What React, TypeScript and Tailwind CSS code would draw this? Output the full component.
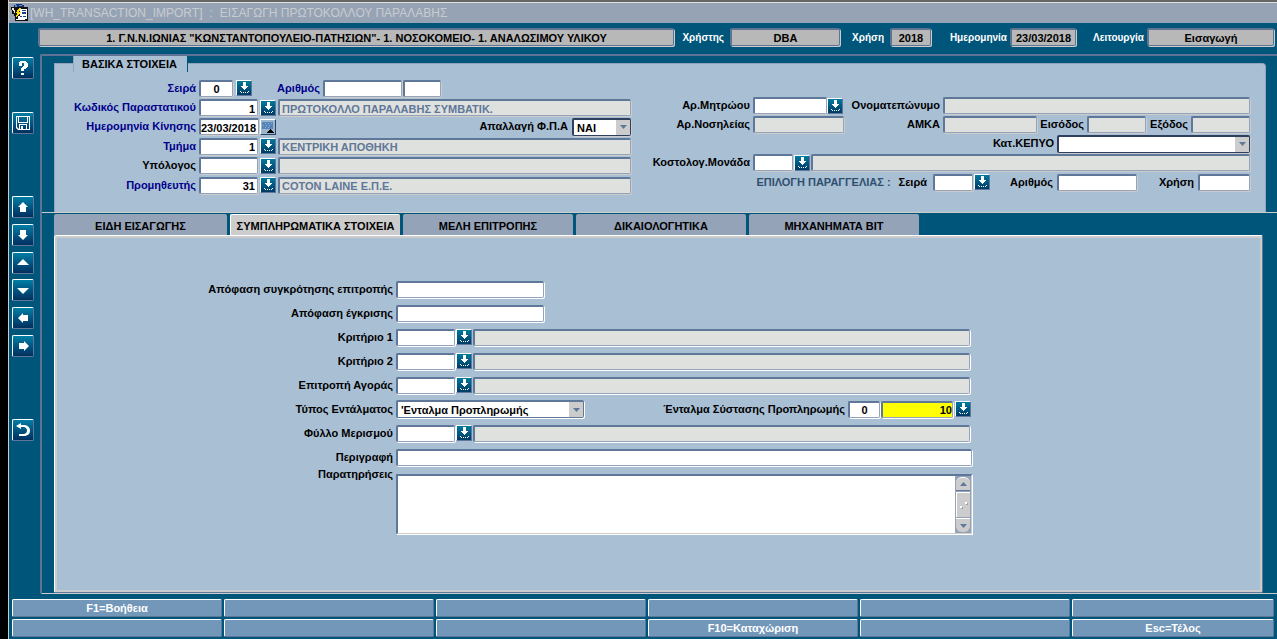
import React from "react";
import clsx from "clsx";

const FONT = "font-['Liberation_Sans',Arial,sans-serif] text-[11px] leading-[13px] font-bold";

type Tone = "white" | "grey" | "yellow";

interface FieldProps {
  id?: string;
  label?: string;
  value?: string;
  tone?: Tone;
  light?: boolean;
  tight?: boolean;
  className?: string;
}

const Field: React.FC<FieldProps> = ({ id, label, value = "", tone = "white", light, tight, className }) => (
  <input
    id={id}
    aria-label={label}
    type="text"
    defaultValue={value}
    readOnly={tone === "grey"}
    className={clsx(
      "h-[17px] min-w-0 rounded-xs border-t-2 border-l-2 border-r border-b pt-px outline-none",
      "border-t-[#5f7799] border-l-[#5f7799] border-r-[#95a3b8] border-b-[#95a3b8]",
      tight ? "px-0" : "px-0.5",
      light ? "shadow-[1px_1px_0_#ffffff]" : "shadow-[1px_1px_0_#cccccc]",
      tone === "white" && "bg-white text-black",
      tone === "grey" && "bg-[#dee1de] text-[#5f7799]",
      tone === "yellow" && "bg-[#ffff00] text-black",
      className
    )}
  />
);

const LookupButton: React.FC<{ label: string }> = ({ label }) => (
  <button
    type="button"
    aria-label={label}
    className="h-4 w-4 shrink-0 border border-t-white border-l-white border-r-[#5f7799] border-b-[#5f7799] bg-linear-to-b from-[#007a9f] to-[#003a66]"
  >
    <svg viewBox="0 0 14 14" className="h-full w-full" fill="#fff" shapeRendering="crispEdges">
      <path d="M6 1h3v4h2v1h-1v1H9v1H8v1H7V8H6V7H5V6H4V5h2z" />
      <path d="M3 10h1v1H3zM11 10h1v1h-1zM4 11h1v1H4zM6 11h1v1H6zM8 11h1v1H8zM10 11h1v1h-1z" />
    </svg>
  </button>
);

const CalendarButton: React.FC = () => (
  <button
    type="button"
    aria-label="Ημερολόγιο"
    className="h-4 w-4 shrink-0 border border-t-white border-l-white border-r-[#2b4460] border-b-[#2b4460] bg-[#9db6cf]"
  >
    <svg viewBox="0 0 14 14" className="h-full w-full" shapeRendering="crispEdges">
      <path fill="#5585b8" d="M1 2h11v7H1z" />
      <path fill="#8fb0d2" d="M4 3h1v1H4zM7 3h1v1H7zM10 3h1v1h-1zM2 5h1v1H2zM5 5h1v1H5zM8 5h1v1H8zM4 7h1v1H4zM7 7h1v1H7z" />
      <path fill="#000" d="M9 9h1v1h1v1h1v1h1v1H6v-1h1v-1h1v-1h1z" />
    </svg>
  </button>
);

interface SelectProps {
  id: string;
  value: string;
  dark?: boolean;
  className?: string;
}

const Select: React.FC<SelectProps> = ({ id, value, dark, className }) => (
  <div className={clsx("relative h-[18px]", className)}>
    <select
      id={id}
      defaultValue={value}
      className={clsx(
        "h-full w-full appearance-none rounded-xs border-t-2 border-l-2 border-r border-b bg-white pt-0.5 pl-[3px] text-black outline-none",
        dark ? "border-[#2f3f5f] shadow-[1px_1px_0_#cccccc]" : "border-[#5f7799] shadow-[1px_1px_0_#ffffff]"
      )}
    >
      <option>{value}</option>
    </select>
    <span className="pointer-events-none absolute top-0.5 right-px bottom-px flex w-3.5 items-center justify-center bg-[#cccccc]">
      <svg viewBox="0 0 7 4" className="h-1 w-[7px]" fill="#5f7799">
        <path d="M0 0h7L3.5 4z" />
      </svg>
    </span>
  </div>
);

interface LabelProps {
  htmlFor: string;
  children: React.ReactNode;
  className?: string;
}

const Label: React.FC<LabelProps> = ({ htmlFor, children, className }) => (
  <label htmlFor={htmlFor} className={clsx("shrink-0 text-right whitespace-nowrap", className)}>
    {children}
  </label>
);

const toolbar = [
  {
    label: "Βοήθεια",
    gap: "mt-[3px]",
    icon: <path d="M5 4V3h1V2h6v1h1v1h1v4h-1v1h-1v1h-2v2H7V9h1V8h1V7h1V4H8v3H5zM7 14h3v2H7z" />,
  },
  {
    label: "Αποθήκευση",
    gap: "mt-[33px]",
    icon: (
      <path
        fillRule="evenodd"
        d="M2 2h14v14H4l-2-2zM3 3v10l2 2v-5h8v5h2V3h-1v6H4V3zM5 3v5h8V3zM6 11v4h1v-3h2v3h3v-4z"
      />
    ),
  },
  { label: "Προηγούμενη ομάδα", gap: "mt-[62px]", icon: <path d="M9 4l5 5h-2v5H6V9H4z" /> },
  { label: "Επόμενη ομάδα", gap: "mt-1.5", icon: <path d="M6 4h6v5h2l-5 5-5-5h2z" /> },
  { label: "Προηγούμενη εγγραφή", gap: "mt-1.5", icon: <path d="M9 5l6 6H3z" /> },
  { label: "Επόμενη εγγραφή", gap: "mt-[5px]", icon: <path d="M3 7h12l-6 6z" /> },
  { label: "Προηγούμενο πεδίο", gap: "mt-1.5", icon: <path d="M4 9l5-5v2h5v6H9v2z" /> },
  { label: "Επόμενο πεδίο", gap: "mt-1.5", icon: <path d="M5 6h5V4l5 5-5 5v-2H5z" /> },
  {
    label: "Επιστροφή",
    gap: "mt-[62px]",
    icon: <path d="M2 5l5-3v2h4q5 1 5 5.500T11 15H5v-2h5q3-1 3-3.500T10 6H7v2z" />,
  },
];

const tabs = ["ΕΙΔΗ ΕΙΣΑΓΩΓΗΣ", "ΣΥΜΠΛΗΡΩΜΑΤΙΚΑ ΣΤΟΙΧΕΙΑ", "ΜΕΛΗ ΕΠΙΤΡΟΠΗΣ", "ΔΙΚΑΙΟΛΟΓΗΤΙΚΑ", "ΜΗΧΑΝΗΜΑΤΑ ΒΙΤ"];

const functionKeys = ["F1=Βοήθεια", "", "", "", "", "", "", "", "", "F10=Καταχώριση", "", "Esc=Τέλος"];

const TitleBar = () => (
  <header className="flex h-[23px] items-center border-t-2 border-[#666666] bg-[#95a3b5] pl-0.5 shadow-[inset_0_1px_0_#e0e0e0]">
    <svg viewBox="0 0 17 17" className="h-[17px] w-[17px] shrink-0" shapeRendering="crispEdges">
      <path fill="#1c2f6c" d="M3 1h2V0h6v1h2v3H3z" />
      <path fill="#4f8fd0" d="M4 1h2v2H4zM8 1h3v1H8z" />
      <path fill="#111" d="M0 3h5v3h1v3h1v5H5v-2H3v-2H1V6H0z" />
      <path fill="#f2ead0" d="M1 4h2v2h1v3H3V7H2V6H1z" />
      <path fill="#111" d="M4 3h13v14H4z" />
      <path fill="#fff" d="M9 5h7v10H7v-3h2z" />
      <path fill="#ffe000" d="M8 4h2L8 8h2l-5 6 1-5H5z" />
      <path fill="#1c3f8c" d="M11 6h4v1h-4zM11 8h4v2h-4zM9 12h2v1H9zM12 12h3v1h-3z" />
      <path fill="#fff" d="M5 15h9v1H5z" />
    </svg>
    <h1 className="ml-0.5 flex gap-[7px] text-[12px] leading-4 font-normal whitespace-nowrap text-[#c8ccd0]">
      <span>[WH_TRANSACTION_IMPORT]</span>
      <span>:</span>
      <span>ΕΙΣΑΓΩΓΗ ΠΡΩΤΟΚΟΛΛΟΥ ΠΑΡΑΛΑΒΗΣ</span>
    </h1>
  </header>
);

const HeaderField: React.FC<{ id: string; label?: string; value: string; className: string }> = ({
  id,
  label,
  value,
  className,
}) => (
  <input
    id={id}
    aria-label={label}
    readOnly
    defaultValue={value}
    className={clsx(
      "h-[18px] min-w-0 rounded-xs border-t-2 border-l-2 border-r border-b border-[#5f7393] bg-[#b8b8b8] text-center text-black shadow-[1px_1px_0_#cccccc] outline-none",
      className
    )}
  />
);

const SessionBar = () => (
  <div className="flex h-[31px] items-start pt-[5px] pr-[3px] pl-[29px]">
    <HeaderField
      id="unit"
      label="Μονάδα"
      value={'1. Γ.Ν.Ν.ΙΩΝΙΑΣ "ΚΩΝΣΤΑΝΤΟΠΟΥΛΕΙΟ-ΠΑΤΗΣΙΩΝ"- 1. ΝΟΣΟΚΟΜΕΙΟ- 1. ΑΝΑΛΩΣΙΜΟΥ ΥΛΙΚΟΥ'}
      className="flex-1"
    />
    <div className="flex items-center text-[10px] text-white">
      <Label htmlFor="user" className="w-[50px]">Χρήστης</Label>
      <HeaderField id="user" value="DBA" className="ml-1.5 w-[110px] text-[11px]" />
      <Label htmlFor="year" className="w-11">Χρήση</Label>
      <HeaderField id="year" value="2018" className="ml-1.5 w-[41px] text-[11px]" />
      <Label htmlFor="date" className="w-[76px]">Ημερομηνία</Label>
      <HeaderField id="date" value="23/03/2018" className="ml-[3px] w-[66px] text-[11px]" />
      <Label htmlFor="mode" className="w-[68px]">Λειτουργία</Label>
      <HeaderField id="mode" value="Εισαγωγή" className="ml-[3px] w-[127px] text-[11px]" />
    </div>
  </div>
);

const Toolbar = () => (
  <nav className="flex w-[31px] shrink-0 flex-col pl-[3px]">
    {toolbar.map((item) => (
      <button
        key={item.label}
        type="button"
        aria-label={item.label}
        className={clsx(
          "flex h-[22px] w-[22px] shrink-0 items-center justify-center rounded-xs border border-t-white border-l-white border-r-[#5f7799] border-b-[#5f7799] bg-linear-to-b from-[#007fa5] to-[#002f5f]",
          item.gap
        )}
      >
        <svg viewBox="0 0 18 18" className="h-[18px] w-[18px]" fill="#fff">
          {item.icon}
        </svg>
      </button>
    ))}
  </nav>
);

const BasicInfo = () => (
  <section className="relative mt-[7px] mr-[11px] ml-3 flex rounded-tr-sm border-t border-r border-l border-[#95a3b8] bg-[#a9bfd4] pt-3.5 pb-[17px]">
    <h2 className="absolute -top-2 left-[18px] h-4 w-[115px] border-r border-l border-l-[#95a3b8] border-r-[#00557b] bg-[#a9bfd4] pt-0.5 pl-2">
      ΒΑΣΙΚΑ ΣΤΟΙΧΕΙΑ
    </h2>

    <div className="w-[576px] shrink-0 text-[#00008b]">
      <div className="flex h-5 items-center">
        <Label htmlFor="series" className="mr-[3px] w-[141px]">Σειρά</Label>
        <Field id="series" value="0" className="w-[34px] text-center" />
        <span className="ml-[3px] flex"><LookupButton label="Αναζήτηση σειράς" /></span>
        <Label htmlFor="number" className="mr-[3px] ml-6 w-11">Αριθμός</Label>
        <Field id="number" className="w-[79px]" />
        <Field label="Αριθμός, συμπλήρωμα" className="ml-px w-[38px]" />
      </div>
      <div className="flex h-[19px] items-center">
        <Label htmlFor="doc" className="mr-[3px] w-[141px]">Κωδικός Παραστατικού</Label>
        <Field id="doc" value="1" className="w-[59px] text-right" />
        <span className="mx-0.5 flex"><LookupButton label="Αναζήτηση παραστατικού" /></span>
        <Field label="Παραστατικό" tone="grey" value="ΠΡΩΤΟΚΟΛΛΟ ΠΑΡΑΛΑΒΗΣ ΣΥΜΒΑΤΙΚ." className="flex-1" />
      </div>
      <div className="flex h-[19px] items-center">
        <Label htmlFor="moved" className="mr-[3px] w-[141px]">Ημερομηνία Κίνησης</Label>
        <Field id="moved" value="23/03/2018" tight className="w-[60px]" />
        <span className="ml-px flex"><CalendarButton /></span>
        <Label htmlFor="vat" className="mr-1 ml-auto text-black">Απαλλαγή Φ.Π.Α</Label>
        <Select id="vat" value="ΝΑΙ" dark className="w-[59px]" />
      </div>
      <div className="flex h-5 items-center">
        <Label htmlFor="dept" className="mr-[3px] w-[141px]">Τμήμα</Label>
        <Field id="dept" value="1" className="w-[59px] text-right" />
        <span className="mx-0.5 flex"><LookupButton label="Αναζήτηση τμήματος" /></span>
        <Field label="Όνομα τμήματος" tone="grey" value="ΚΕΝΤΡΙΚΗ ΑΠΟΘΗΚΗ" className="flex-1" />
      </div>
      <div className="flex h-[19px] items-center">
        <Label htmlFor="officer" className="mr-[3px] w-[141px] text-black">Υπόλογος</Label>
        <Field id="officer" className="w-[59px] text-right" />
        <span className="mx-0.5 flex"><LookupButton label="Αναζήτηση υπολόγου" /></span>
        <Field label="Όνομα υπολόγου" tone="grey" className="flex-1" />
      </div>
      <div className="flex h-5 items-center">
        <Label htmlFor="supplier" className="mr-[3px] w-[141px]">Προμηθευτής</Label>
        <Field id="supplier" value="31" className="w-[59px] text-right" />
        <span className="mx-0.5 flex"><LookupButton label="Αναζήτηση προμηθευτή" /></span>
        <Field label="Όνομα προμηθευτή" tone="grey" value="COTON LAINE Ε.Π.Ε." className="flex-1" />
      </div>
    </div>

    <div className="min-w-0 flex-1 pt-[18px] pr-[15px] text-black">
      <div className="flex h-[19px] items-center">
        <Label htmlFor="registry" className="mr-[3px] w-[119px]">Αρ.Μητρώου</Label>
        <Field id="registry" className="w-[74px]" />
        <LookupButton label="Αναζήτηση μητρώου" />
        <Label htmlFor="fullname" className="mr-[3px] w-[97px]">Ονοματεπώνυμο</Label>
        <Field id="fullname" tone="grey" className="flex-1" />
      </div>
      <div className="flex h-[19px] items-center">
        <Label htmlFor="stay" className="mr-[3px] w-[119px]">Αρ.Νοσηλείας</Label>
        <Field id="stay" tone="grey" className="w-[91px]" />
        <Label htmlFor="amka" className="mr-[3px] w-24">ΑΜΚΑ</Label>
        <Field id="amka" tone="grey" className="flex-1" />
        <Label htmlFor="admission" className="mx-[3px]">Εισόδος</Label>
        <Field id="admission" tone="grey" className="w-[59px]" />
        <Label htmlFor="discharge" className="mr-[3px] ml-1">Εξόδος</Label>
        <Field id="discharge" tone="grey" className="w-[59px]" />
      </div>
      <div className="flex h-[19px] items-center justify-end">
        <Label htmlFor="kepyo" className="mr-[3px]">Κατ.ΚΕΠΥΟ</Label>
        <Select id="kepyo" value="" dark className="w-[193px]" />
      </div>
      <div className="flex h-[19px] items-center">
        <Label htmlFor="cost" className="mr-[3px] w-[119px]">Κοστολογ.Μονάδα</Label>
        <Field id="cost" className="w-10" />
        <span className="mx-px flex"><LookupButton label="Αναζήτηση μονάδας" /></span>
        <Field label="Κοστολογική μονάδα" tone="grey" className="flex-1" />
      </div>
      <div className="flex h-5 items-center justify-end">
        <span className="mr-2 whitespace-nowrap text-[#2f4f6f]">ΕΠΙΛΟΓΗ ΠΑΡΑΓΓΕΛΙΑΣ :</span>
        <Label htmlFor="orderSeries" className="mr-1.5">Σειρά</Label>
        <Field id="orderSeries" className="w-10" />
        <span className="ml-px flex"><LookupButton label="Αναζήτηση παραγγελίας" /></span>
        <Label htmlFor="orderNumber" className="mr-1 w-[63px]">Αριθμός</Label>
        <Field id="orderNumber" className="w-20" />
        <Label htmlFor="orderYear" className="mr-1 w-[57px]">Χρήση</Label>
        <Field id="orderYear" className="w-[52px]" />
      </div>
    </div>
  </section>
);

const Tabs = () => (
  <div role="tablist" className="ml-3 flex gap-[3px] pt-px">
    {tabs.map((tab, index) => (
      <button
        key={tab}
        type="button"
        role="tab"
        aria-selected={index === 1}
        className={clsx(
          "h-[21px] rounded-t-xs whitespace-nowrap",
          index === 0 ? "w-[173px]" : "w-[170px]",
          index === 1 ? "border-t border-l border-white bg-[#cccccc] pt-0.5" : "bg-[#95a3b8] pt-[3px]"
        )}
      >
        {tab}
      </button>
    ))}
  </div>
);

interface FormRowProps {
  id: string;
  label: string;
  children: React.ReactNode;
}

const FormRow: React.FC<FormRowProps> = ({ id, label, children }) => (
  <div className="flex h-6 items-center">
    <Label htmlFor={id} className="mr-[3px] w-[336px]">{label}</Label>
    <div className="flex max-w-[576px] min-w-0 flex-1 items-center">{children}</div>
  </div>
);

const LookupRow: React.FC<{ id: string; label: string }> = ({ id, label }) => (
  <FormRow id={id} label={label}>
    <Field id={id} light className="w-[59px]" />
    <span className="mr-px ml-px flex"><LookupButton label={`Αναζήτηση: ${label}`} /></span>
    <Field label={`${label}, περιγραφή`} tone="grey" light className="mr-0.5 flex-1" />
  </FormRow>
);

const ScrollBar = () => (
  <div aria-hidden="true" className="flex w-4 flex-col gap-px bg-[#95a3b8] p-px">
    <span className="flex h-3.5 items-center justify-center rounded-t-md border-t border-b border-t-white border-b-[#5f7799] bg-[#cccccc]">
      <svg viewBox="0 0 7 4" className="h-1 w-[7px]" fill="#5f7799"><path d="M3.500 0L7 4H0z" /></svg>
    </span>
    <span className="flex flex-1 items-center justify-center border-t border-l border-white bg-[#cccccc]">
      <svg viewBox="0 0 8 8" className="h-2 w-2">
        <path fill="#fff" d="M0 5h2v2H0zM5 1h2v2H5z" />
        <path fill="#95a3b8" d="M2 6h1v2H1V7h1zM7 2h1v2H6V3h1z" />
      </svg>
    </span>
    <span className="flex h-3.5 items-center justify-center rounded-b-md border-t border-white bg-[#cccccc]">
      <svg viewBox="0 0 7 4" className="h-1 w-[7px]" fill="#5f7799"><path d="M0 0h7L3.500 4z" /></svg>
    </span>
  </div>
);

const SupplementaryInfo = () => (
  <section className="mr-3.5 ml-3 flex-1 rounded-xs border border-t-white border-l-white border-r-[#5f7799] border-b-[#5f7799] bg-[#a9bfd4] pt-[41px] pl-0.5 text-black shadow-[inset_0_0_0_2px_#cccccc]">
    <FormRow id="committee" label="Απόφαση συγκρότησης επιτροπής">
      <Field id="committee" light className="w-[148px]" />
    </FormRow>
    <FormRow id="approval" label="Απόφαση έγκρισης">
      <Field id="approval" light className="w-[148px]" />
    </FormRow>
    <LookupRow id="criterion1" label="Κριτήριο 1" />
    <LookupRow id="criterion2" label="Κριτήριο 2" />
    <LookupRow id="market" label="Επιτροπή Αγοράς" />
    <FormRow id="warrantType" label="Τύπος Εντάλματος">
      <Select id="warrantType" value="'Ενταλμα Προπληρωμής" className="w-[188px]" />
      <Label htmlFor="warrantSeries" className="mr-[3px] ml-auto">Ένταλμα Σύστασης Προπληρωμής</Label>
      <Field id="warrantSeries" value="0" light className="w-8 text-center" />
      <Field label="Αριθμός εντάλματος" value="10" tone="yellow" light tight className="ml-px w-[72px] text-right" />
      <span className="mr-px ml-0.5 flex"><LookupButton label="Αναζήτηση εντάλματος" /></span>
    </FormRow>
    <LookupRow id="allocation" label="Φύλλο Μερισμού" />
    <FormRow id="description" label="Περιγραφή">
      <Field id="description" light className="flex-1" />
    </FormRow>
    <div className="mt-[5px] flex">
      <Label htmlFor="notes" className="-mt-1.5 mr-[3px] w-[336px]">Παρατηρήσεις</Label>
      <div className="flex h-[60px] max-w-[576px] flex-1 border-t-2 border-r border-b border-l-2 border-t-[#5f7799] border-r-[#cccccc] border-b-[#cccccc] border-l-[#5f7799] bg-white shadow-[1px_1px_0_#ffffff]">
        <textarea id="notes" className="min-w-0 flex-1 resize-none bg-white px-[3px] outline-none" />
        <ScrollBar />
      </div>
    </div>
  </section>
);

const FunctionKeys = () => (
  <footer className="grid grid-cols-[repeat(5,210fr)_202fr] gap-0.5 pt-[5px] pr-[3px] pb-0.5 pl-[3px]">
    {functionKeys.map((key, index) => (
      <button
        key={index}
        type="button"
        aria-label={key || `Πλήκτρο ${index + 1}`}
        className="h-[18px] rounded-xs border border-t-white border-l-white border-r-[#5f7799] border-b-[#5f7799] bg-[#7397b9] text-white"
      >
        {key}
      </button>
    ))}
  </footer>
);

const App: React.FC = () => (
  <div className={clsx("flex min-h-screen bg-black pl-2", FONT)}>
    <div className="flex min-w-0 flex-1 flex-col border-l border-[#cccccc] bg-[#00557b]">
      <TitleBar />
      <SessionBar />
      <main className="flex flex-1">
        <Toolbar />
        <div className="flex min-w-0 flex-1 flex-col rounded-l-xs border-t-2 border-b border-l-2 border-t-[#5f7393] border-b-[#cccccc] border-l-[#5f7393]">
          <BasicInfo />
          <div className="border-t border-[#cccccc]">
            <Tabs />
          </div>
          <SupplementaryInfo />
        </div>
      </main>
      <FunctionKeys />
    </div>
  </div>
);

export default App;
